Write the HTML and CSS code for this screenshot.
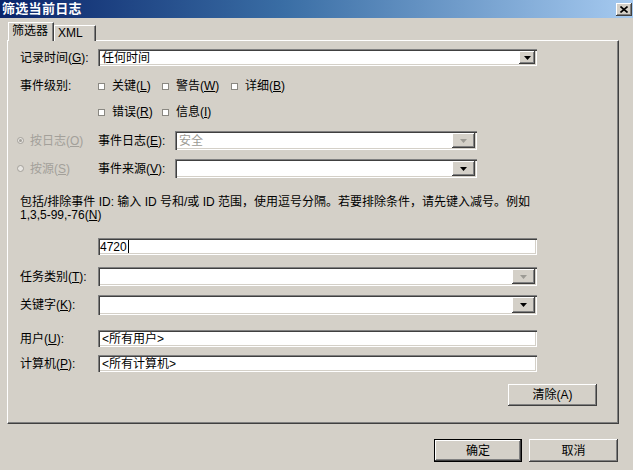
FILE: index.html
```html
<!DOCTYPE html>
<html lang="zh-CN">
<head>
<meta charset="utf-8">
<title>筛选当前日志</title>
<link rel="stylesheet" href="styles.css">
</head>
<body>
<div class="titlebar">
  <span class="title">筛选当前日志</span>
  <span class="close"><svg width="8" height="7" viewBox="0 0 8 7"><path d="M0.5 0.5 L7.5 6.5 M7.5 0.5 L0.5 6.5" stroke="#000" stroke-width="1.6"/></svg></span>
</div>
<div class="tabs">
  <div class="tab active">筛选器</div>
  <div class="tab">XML</div>
</div>
<div class="panel">
  <div class="row">
    <span class="lbl">记录时间(<u>G</u>):</span>
    <div class="field combo h17 w439"><span class="val">任何时间</span><span class="ddbtn w16"><svg width="7" height="4" viewBox="0 0 7 4"><path d="M0 0H7L3.5 4Z" fill="#000"/></svg></span></div>
  </div>
  <div class="row checks c1">
    <span class="lbl">事件级别:</span>
    <div class="grid">
      <span class="cb"><i class="box"></i>关键(<u>L</u>)</span>
      <span class="cb"><i class="box"></i>警告(<u>W</u>)</span>
      <span class="cb"><i class="box"></i>详细(<u>B</u>)</span>
    </div>
  </div>
  <div class="row checks c2">
    <span class="lbl"></span>
    <div class="grid">
      <span class="cb"><i class="box"></i>错误(<u>R</u>)</span>
      <span class="cb"><i class="box"></i>信息(<u>I</u>)</span>
    </div>
  </div>
  <div class="row r1">
    <span class="radiogrp dis"><i class="radio on"></i>按日志(<u>O</u>)</span>
    <span class="lbl2">事件日志(<u>E</u>):</span>
    <div class="field combo h19 w302"><span class="val dis">安全</span><span class="ddbtn w23"><svg width="7" height="4" viewBox="0 0 7 4"><path d="M0 0H7L3.5 4Z" fill="#9c9a94"/></svg></span></div>
  </div>
  <div class="row r2">
    <span class="radiogrp dis"><i class="radio"></i>按源(<u>S</u>)</span>
    <span class="lbl2">事件来源(<u>V</u>):</span>
    <div class="field combo h19 w302"><span class="val"></span><span class="ddbtn w23"><svg width="7" height="4" viewBox="0 0 7 4"><path d="M0 0H7L3.5 4Z" fill="#000"/></svg></span></div>
  </div>
  <p class="desc">包括/排除事件 ID: 输入 ID 号和/或 ID 范围，使用逗号分隔。若要排除条件，请先键入减号。例如<br>1,3,5-99,-76(<u>N</u>)</p>
  <div class="row r-id">
    <span class="lbl"></span>
    <div class="field h17 w439"><span class="val tight">4720<i class="caret"></i></span></div>
  </div>
  <div class="row r-task">
    <span class="lbl">任务类别(<u>T</u>):</span>
    <div class="field combo h19 w439"><span class="val"></span><span class="ddbtn w23"><svg width="7" height="4" viewBox="0 0 7 4"><path d="M0 0H7L3.5 4Z" fill="#9c9a94"/></svg></span></div>
  </div>
  <div class="row r-key">
    <span class="lbl">关键字(<u>K</u>):</span>
    <div class="field combo h20 w439"><span class="val"></span><span class="ddbtn w23"><svg width="7" height="4" viewBox="0 0 7 4"><path d="M0 0H7L3.5 4Z" fill="#000"/></svg></span></div>
  </div>
  <div class="row r-user">
    <span class="lbl">用户(<u>U</u>):</span>
    <div class="field h17 w439"><span class="val">&lt;所有用户&gt;</span></div>
  </div>
  <div class="row r-comp">
    <span class="lbl">计算机(<u>P</u>):</span>
    <div class="field h17 w439"><span class="val">&lt;所有计算机&gt;</span></div>
  </div>
  <div class="row r-clear">
    <span class="btn b-clear">清除(A)</span>
  </div>
</div>
<div class="footer">
  <span class="btn default b-ok">确定</span>
  <span class="btn b-cancel">取消</span>
</div>
</body>
</html>
```
FILE: styles.css
```css
* { box-sizing: border-box; }
body {
  margin: 0;
  width: 633px;
  height: 470px;
  overflow: hidden;
  background: #d4d0c8;
  font: 12px/14px "Liberation Sans", "Noto Sans CJK SC", sans-serif;
  color: #000;
}
u { text-decoration: underline; text-underline-offset: 1px; }

.titlebar {
  height: 18px;
  display: flex;
  align-items: center;
  padding: 0 1px 0 2px;
  background: linear-gradient(to right, #0a246a 0%, #3a6ea5 45%, #a6caf0 100%);
}
.title { color: #fff; font-weight: bold; font-size: 13px; letter-spacing: 0.3px; }
.close {
  margin-left: auto;
  width: 16px;
  height: 13px;
  background: #d4d0c8;
  display: flex;
  align-items: center;
  justify-content: center;
  box-shadow: inset -1px -1px #404040, inset 1px 1px #fff, inset -2px -2px #808080;
}

.tabs {
  display: flex;
  align-items: flex-end;
  height: 19px;
  margin-top: 4px;
  margin-bottom: -1px;
  padding-left: 8px;
}
.tab {
  height: 16px;
  padding: 0 0 0 3px;
  width: 42px;
  line-height: 15px;
  border-top: 1px solid #fff;
  border-left: 1px solid #fff;
  border-right: 1px solid #404040;
  box-shadow: inset -1px 0 #808080;
  background: #d4d0c8;
}
.tab.active {
  height: 19px;
  width: 46px;
  padding-left: 3px;
  line-height: 17px;
  position: relative;
  z-index: 1;
}

.panel {
  height: 384px;
  width: 612px;
  margin-left: 7px;
  border-top: 1px solid #fff;
  border-left: 1px solid #fff;
  border-right: 1px solid #404040;
  border-bottom: 1px solid #404040;
  box-shadow: inset -1px -1px #808080;
  padding: 8px 21px 0 12px;
}

.row { display: flex; align-items: center; }
.lbl { width: 78px; flex: none; white-space: nowrap; }
.lbl2 { width: 77px; flex: none; white-space: nowrap; }

.field {
  background: #fff;
  display: flex;
  align-items: stretch;
  padding: 2px;
  box-shadow: inset 1px 1px #808080, inset 2px 2px #404040, inset -1px -1px #fff, inset -2px -2px #d4d0c8;
}
.val { flex: 1; padding-left: 2px; white-space: nowrap; display: flex; align-items: center; }
.val.tight { padding-left: 0; }
.val.dis { color: #9c9a94; }
.caret { display: inline-block; width: 1px; height: 13px; background: #000; margin-left: 1px; }
.h17 { height: 17px; }
.h19 { height: 19px; }
.h20 { height: 20px; }
.w439 { width: 439px; }
.w302 { width: 302px; }

.ddbtn {
  flex: none;
  background: #d4d0c8;
  display: flex;
  align-items: center;
  justify-content: center;
  box-shadow: inset -1px -1px #404040, inset 1px 1px #fff, inset -2px -2px #808080;
}
.w16 { width: 16px; }
.w23 { width: 23px; }

.checks { height: 14px; }
.c1 { margin-top: 13px; }
.c2 { margin-top: 12px; }
.grid { display: grid; grid-template-columns: 64px 69px auto; }
.cb { display: flex; align-items: center; white-space: nowrap; }
.box {
  width: 7px;
  height: 7px;
  margin-right: 7px;
  background: #fff;
  border: 1px solid #8a8882;
}

.r1 { margin-top: 12px; margin-left: -3px; }
.r2 { margin-top: 9px; margin-left: -3px; }
.radiogrp { width: 81px; flex: none; display: flex; align-items: center; white-space: nowrap; }
.dis { color: #a3a09a; }
.radio {
  width: 7px;
  height: 7px;
  border-radius: 50%;
  border: 1px solid #a3a09a;
  background: #e8e6e2;
  margin-right: 6px;
  display: flex;
  align-items: center;
  justify-content: center;
}
.radio.on::after {
  content: "";
  width: 3px;
  height: 3px;
  border-radius: 50%;
  background: #a3a09a;
}

.desc { margin: 18px 0 0; line-height: 13px; white-space: nowrap; height: 26px; }
.r-id { margin-top: 16px; }
.r-task { margin-top: 12px; }
.r-key { margin-top: 9px; }
.r-user { margin-top: 15px; }
.r-comp { margin-top: 8px; }
.r-clear { margin-top: 12px; justify-content: flex-end; }

.btn {
  display: flex;
  align-items: center;
  justify-content: center;
  background: #d4d0c8;
  box-shadow: inset -1px -1px #404040, inset 1px 1px #fff, inset -2px -2px #808080;
}
.btn.default {
  border: 1px solid #000;
  box-shadow: inset -1px -1px #404040, inset 1px 1px #fff, inset -2px -2px #808080;
}
.b-clear { width: 89px; height: 22px; }
.footer {
  display: flex;
  justify-content: flex-end;
  gap: 7px;
  margin-top: 15px;
  padding-right: 15px;
}
.b-ok { width: 88px; height: 23px; }
.b-cancel { width: 89px; height: 23px; }
```
